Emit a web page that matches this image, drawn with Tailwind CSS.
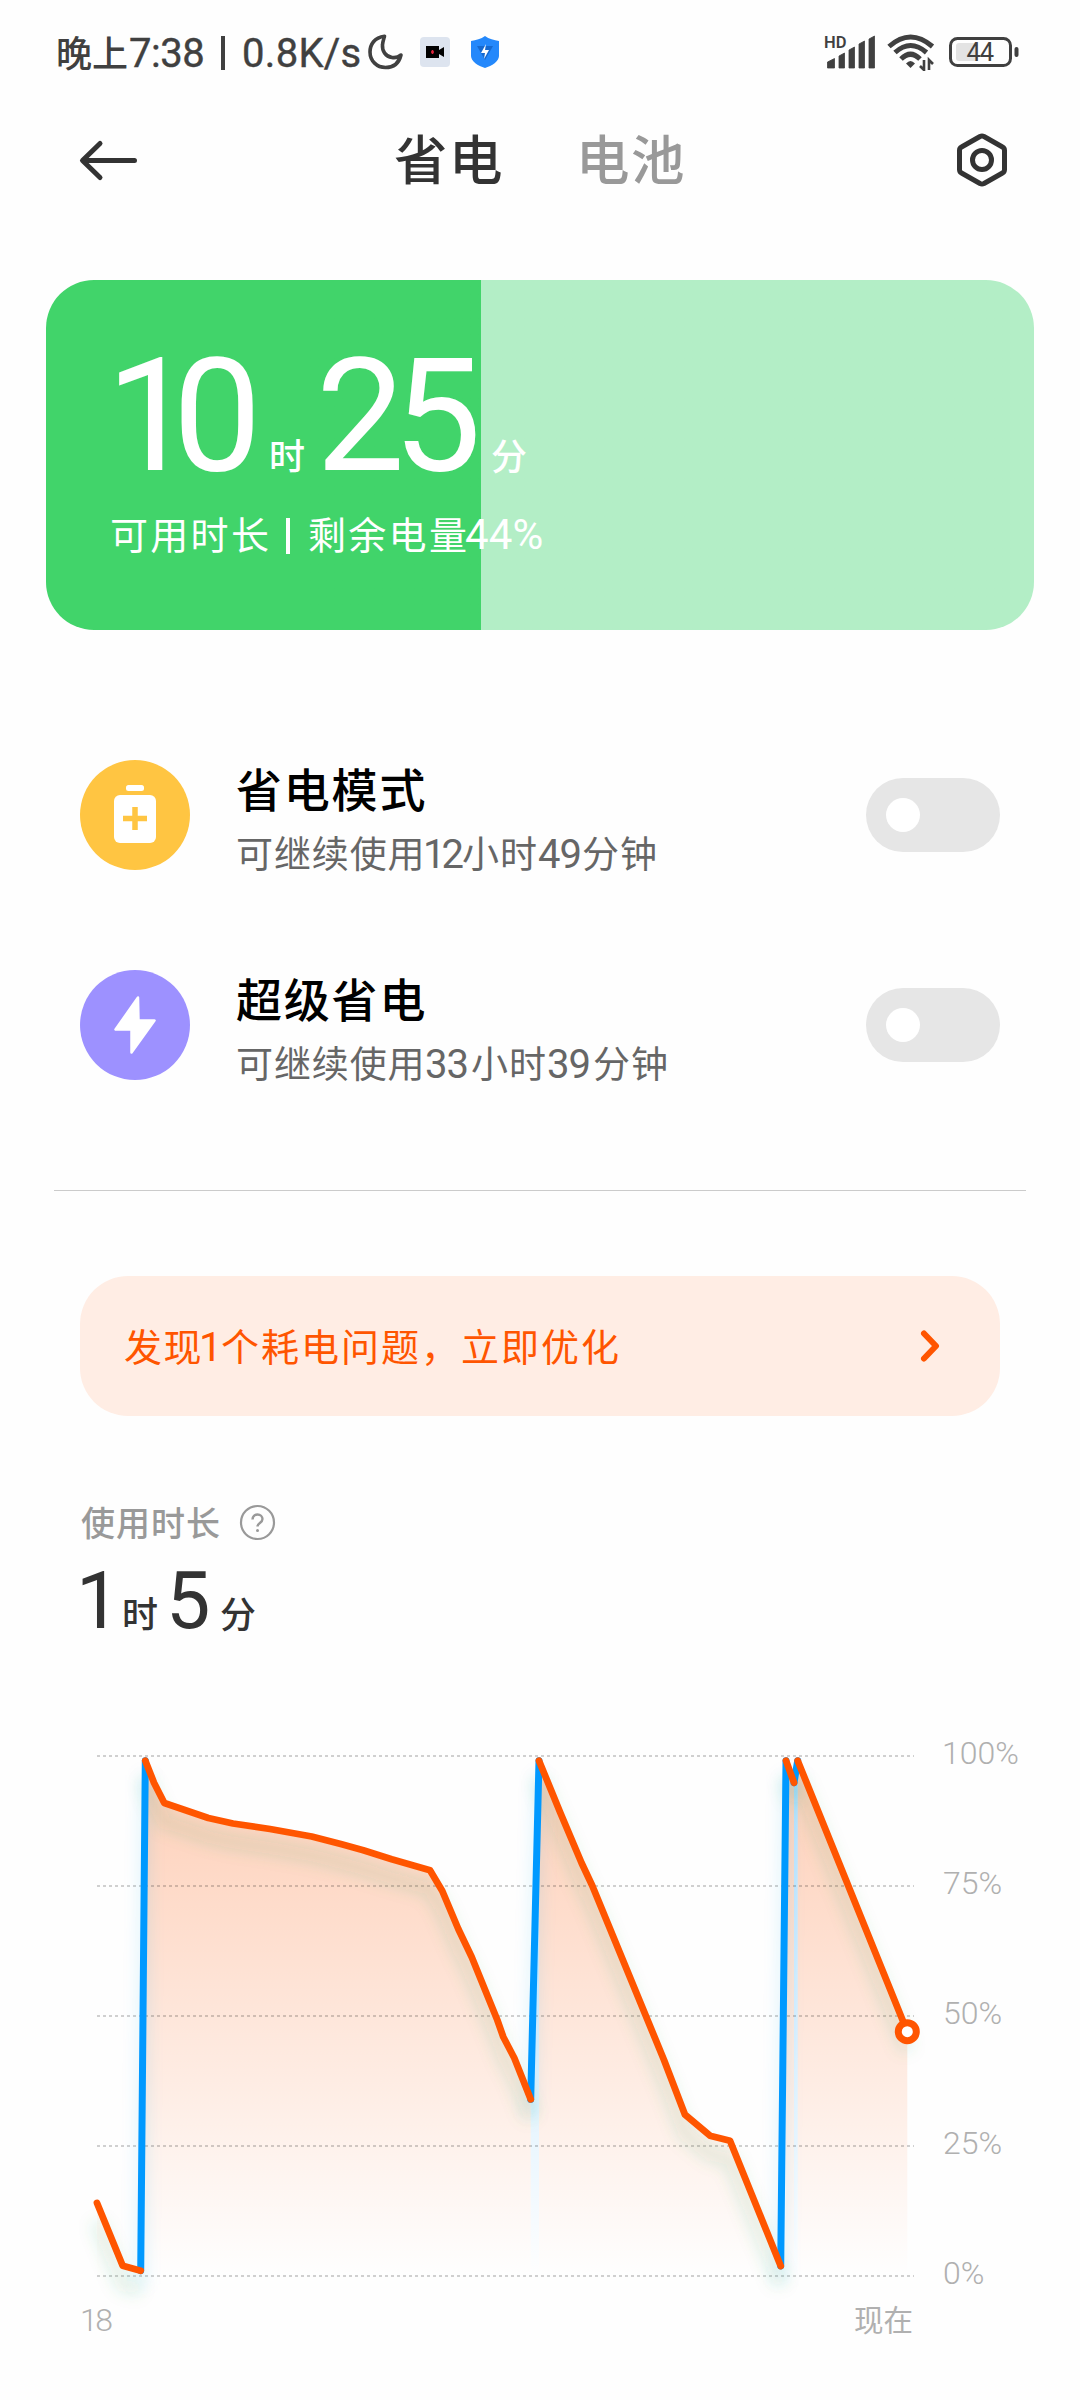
<!DOCTYPE html>
<html lang="zh-CN">
<head>
<meta charset="utf-8">
<title>省电与电池</title>
<script src="https://cdn.jsdelivr.net/npm/@tailwindcss/browser@4"></script>
</head>
<body class="bg-white">
<main class="flex h-[2400px] w-[1080px] flex-col overflow-hidden bg-[#fefefe] font-['Noto_Sans_CJK_SC',sans-serif] whitespace-nowrap text-[#333]">

  <!-- status bar -->
  <div class="flex h-[104px] items-center pl-[56px] text-[#404040]">
    <div class="flex w-[312px] items-baseline text-[36px] leading-[48px] font-medium">
      <span class="w-[73px]">晚上</span>
      <span class="w-[92px] font-['Roboto'] text-[40px] tracking-[-0.5px] font-normal [-webkit-text-stroke:0.4px]">7:38</span>
      <span class="mt-[2px] mr-[17px] h-[34px] w-[4px] self-center bg-[#404040]"></span>
      <span class="font-['Roboto'] text-[40px] tracking-[0.3px] font-normal [-webkit-text-stroke:0.4px]">0.8K/s</span>
    </div>
    <svg class="h-[36px] w-[36px]" viewBox="0 0 36 36" fill="none" stroke="#404040" stroke-width="3.6" stroke-linejoin="round"><path d="M16.500 2.200C6.500 3.500 2 10.500 2 18c0 9 7 15.500 15.500 15.500 8 0 13.500-4.500 15.500-12.500-3 2.500-6 3-9 2.500-6.500-1-10-6.500-9.500-12.500.2-3.500 1.200-6 2-8.800Z"/></svg>
    <svg class="ml-[16px] h-[30px] w-[30px]" viewBox="0 0 30 30"><rect width="30" height="30" rx="4" fill="#dde4ef"/><path d="M6 9h13v12H6zM19 13l5-3v10l-5-3z" fill="#000"/><path d="M12.500 13v4M11 15h3" stroke="#e0243c" stroke-width="1.600"/></svg>
    <svg class="ml-[21px] h-[32px] w-[28px]" viewBox="0 0 28 32"><path d="M14 0c4 3 9 4 14 5v15c0 5-7 10-14 12C7 30 0 25 0 20V5c5-1 10-2 14-5Z" fill="#2488fb"/><path d="M6 10h16l-8 14z" fill="#1669cf"/><path d="M15 8l-5 9h4l-1 6 5-9h-4z" fill="#fff"/></svg>
    <svg class="ml-[325px] h-[36px] w-[52px]" viewBox="0 0 52 36" fill="#404040"><text x="0" y="13.500" font-family="Roboto" font-weight="600" font-size="16.500">HD</text><path d="M3.500 28l7-3.500V34h-7zM15 22l5.500-3v15H15zM25 16l5.500-3v21H25zM35 10l5.500-3v27H35zM45 5l5.500-3v32H45z" stroke="#404040" stroke-width=".8" stroke-linejoin="round"/></svg>
    <svg class="ml-[11px] h-[38px] w-[48px]" viewBox="0 0 48 38" fill="none" stroke="#404040" stroke-width="5"><path d="M2 13.500Q23.500-5.500 45.500 13.500"/><path d="M8 19.500Q23.500 5.500 39.500 19.500"/><path d="M14 26Q23.500 16.500 33 26"/><path d="M19 30.500Q23.500 25.500 28 30.500L23.500 35Z" fill="#404040" stroke="none"/><path d="M37 27v10l-4-4M42 37V27l4 4" stroke-width="2.600"/></svg>
    <svg class="ml-[14px] h-[32px] w-[70px]" viewBox="0 0 70 32"><rect x="1.500" y="2.500" width="60" height="27" rx="7" fill="none" stroke="#404040" stroke-width="3"/><path d="M10 7h19v18H10a3 3 0 0 1-3-3V10a3 3 0 0 1 3-3Z" fill="#e3e3e3"/><rect x="65.500" y="11" width="4" height="10" rx="2" fill="#404040"/><text x="17.500" y="25" font-family="Roboto" font-size="25.500" textLength="27.500" font-weight="400" fill="#404040">44</text></svg>
  </div>

  <!-- header with tabs -->
  <header class="flex h-[112px] items-center pl-[78px]">
    <svg class="h-[44px] w-[62px]" viewBox="0 0 62 44" fill="none" stroke="#333" stroke-width="5" stroke-linecap="round" stroke-linejoin="round"><path d="M56.500 22.500H5M22 5.500L4.500 22.500 22 39.500"/></svg>
    <h1 class="mb-[6px] ml-[254px] w-[182px] text-[53.5px] leading-[56px] font-medium tracking-[1.5px]">省电</h1>
    <span class="mb-[6px] w-[379px] text-[53.5px] leading-[56px] font-medium tracking-[1.5px] text-[#999]">电池</span>
    <svg class="h-[58px] w-[54px]" viewBox="0 0 54 58" fill="none" stroke="#333" stroke-width="5" stroke-linejoin="round"><path d="M25 5.500q2-1 4 0l18.500 10.500q2 1 2 3.500v19q0 2.500-2 3.500L29 52.500q-2 1-4 0L6.500 42q-2-1-2-3.500v-19q0-2.500 2-3.500Z"/><circle cx="27" cy="29" r="9.500"/></svg>
  </header>

  <!-- remaining time card -->
  <section class="mx-[46px] mt-[64px] flex h-[350px] flex-col overflow-hidden rounded-[48px] bg-linear-to-r from-[#41d46a] from-44% to-[#b3eec6] to-44% pl-[64px] text-white">
    <div class="mt-[48px] flex h-[176px] items-baseline text-[36px] leading-[176px] font-medium">
      <span class="-ml-[4px] w-[163px] font-['Roboto'] text-[158px] font-normal tracking-[-22px]">10</span>
      <span class="w-[47px]">时</span>
      <span class="w-[175px] font-['Roboto'] text-[158px] font-normal tracking-[-12px]">25</span>
      <span>分</span>
    </div>
    <p class="mt-[1px] flex items-baseline text-[38px] leading-[56px] tracking-[2.3px]">
      <span class="w-[176px]">可用时长</span><span class="mt-[4px] mr-[18px] h-[36px] w-[4px] self-center bg-white"></span><span class="w-[157px]">剩余电量</span><span class="font-['Roboto'] text-[42px] tracking-[0.2px]">44%</span>
    </p>
  </section>

  <!-- saving modes -->
  <section class="mt-[130px] flex flex-col gap-[100px] px-[80px]">
    <div class="flex h-[110px] items-center">
      <svg class="h-[110px] w-[110px]" viewBox="0 0 110 110"><circle cx="55" cy="55" r="55" fill="#ffc542"/><rect x="46" y="25" width="18" height="6" rx="2.500" fill="#fff"/><rect x="34" y="35" width="42" height="48" rx="6" fill="#fff"/><path d="M55 47v23M43 58.500h24" stroke="#ffc542" stroke-width="5.500"/></svg>
      <div class="ml-[46px] w-[630px] pt-[13px]">
        <h2 class="text-[46px] leading-[58px] font-medium tracking-[1.8px] text-black">省电模式</h2>
        <p class="mt-[6px] flex items-baseline text-[37px] leading-[60px] tracking-[0.9px] text-[#666]"><span class="w-[187px]">可继续使用</span><span class="w-[39px] font-['Roboto'] text-[40px] tracking-[-4px]">12</span><span class="w-[76px]">小时</span><span class="w-[44px] font-['Roboto'] text-[40px] tracking-[-1px]">49</span><span>分钟</span></p>
      </div>
      <span class="flex h-[74px] w-[134px] items-center rounded-full bg-[#e6e6e6] pl-[20px]"><i class="h-[34px] w-[34px] rounded-full bg-white"></i></span>
    </div>
    <div class="flex h-[110px] items-center">
      <svg class="h-[110px] w-[110px]" viewBox="0 0 110 110"><circle cx="55" cy="55" r="55" fill="#9d91ff"/><path d="M58 27.500L35.500 59.500H51.500V82.500L74.500 50.500H58.500Z" fill="#fff" stroke="#fff" stroke-width="2.500" stroke-linejoin="round"/></svg>
      <div class="ml-[46px] w-[630px] pt-[13px]">
        <h2 class="text-[46px] leading-[58px] font-medium tracking-[1.8px] text-black">超级省电</h2>
        <p class="mt-[6px] flex items-baseline text-[37px] leading-[60px] tracking-[0.9px] text-[#666]"><span class="w-[189px]">可继续使用</span><span class="w-[46px] font-['Roboto'] text-[40px] tracking-[-1px]">33</span><span class="w-[76px]">小时</span><span class="w-[46px] font-['Roboto'] text-[40px] tracking-[-1px]">39</span><span>分钟</span></p>
      </div>
      <span class="flex h-[74px] w-[134px] items-center rounded-full bg-[#e6e6e6] pl-[20px]"><i class="h-[34px] w-[34px] rounded-full bg-white"></i></span>
    </div>
  </section>

  <div class="mx-[54px] mt-[110px] h-px bg-[#cbcbcb]"></div>

  <!-- issue banner -->
  <section class="mx-[80px] mt-[85px] flex h-[140px] items-center rounded-[48px] bg-[#ffede4] pl-[44px] text-[#ff5500]">
    <p class="flex w-[794px] items-baseline text-[38px] leading-[56px] tracking-[1.6px]"><span class="w-[75px]">发现</span><span class="w-[22px] font-['Roboto'] text-[41px] tracking-[-2px]">1</span><span class="tracking-[2px]">个耗电问题，立即优化</span></p>
    <svg class="h-[36px] w-[24px]" viewBox="0 0 24 36" fill="none" stroke="#ff5500" stroke-width="6" stroke-linecap="round" stroke-linejoin="round"><path d="M6 5.500L18 18 6 30.500"/></svg>
  </section>

  <!-- usage time -->
  <section class="mt-[78px] flex h-[56px] items-center pl-[81px] text-[#999]">
    <span class="w-[158px] text-[34px] leading-[48px] font-medium tracking-[1px]">使用时长</span>
    <svg class="h-[37px] w-[37px]" viewBox="0 0 37 37" fill="none" stroke="#999"><circle cx="18.500" cy="18.500" r="16.500" stroke-width="2.200"/><path d="M13.500 15.500c0-3 2.200-5 5-5s5 1.900 5 4.600c0 3.900-5 4-5 7.400" stroke-width="2.400"/><circle cx="18.500" cy="26.500" r="1.500" fill="#999" stroke="none"/></svg>
  </section>
  <div class="flex h-[90px] items-baseline pl-[76px] text-[36px] leading-[102px] font-medium">
    <span class="w-[46px] font-['Roboto'] text-[79px] font-normal">1</span>
    <span class="w-[44px]">时</span>
    <span class="w-[54px] font-['Roboto'] text-[79px] font-normal">5</span>
    <span>分</span>
  </div>

  <!-- battery level chart: x 0..1080, y 1640..2400 -->
  <svg class="h-[760px] w-[1080px]" viewBox="0 1640 1080 760" fill="none">
    <defs>
      <linearGradient id="drain" gradientUnits="userSpaceOnUse" x1="0" y1="1760" x2="0" y2="2276"><stop stop-color="#ff5500" stop-opacity=".28"/><stop offset="1" stop-color="#ff5500" stop-opacity="0"/></linearGradient>
      <linearGradient id="charge" gradientUnits="userSpaceOnUse" x1="0" y1="1760" x2="0" y2="2276"><stop stop-color="#0099ff" stop-opacity=".3"/><stop offset="1" stop-color="#0099ff" stop-opacity="0"/></linearGradient>
      <filter id="soft" filterUnits="userSpaceOnUse" x="0" y="1640" width="1080" height="760"><feGaussianBlur stdDeviation="7.500"/></filter>
      <g id="drain-lines">
        <path d="M97 2203L122.700 2265.700 140.700 2270.700"/>
        <path d="M145.300 1760.700L154 1782.700 164.300 1803 208.300 1818 233 1823.500 270 1829 311.700 1836.500 341.700 1844.300 363.300 1850.300 391.700 1859.300 430 1870.300 442.300 1891 458.300 1929 471.700 1957 497.300 2020 503.300 2037 514.300 2058 530.700 2099.300"/>
        <path d="M539 1760.700L560 1812 581.700 1863.300 592.300 1885.700 664 2060 685 2114.700 710 2135.700 730 2140.700 780.700 2266"/>
        <path d="M786 1760.700L794 1782.700M797.700 1760.700L907.300 2031.700"/>
      </g>
      <g id="charge-lines">
        <path d="M140.700 2270.700L145.300 1760.700M530.700 2099.300L539 1760.700M780.700 2266L786 1760.700M794 1782.700L797.700 1760.700"/>
      </g>
    </defs>
    <g fill="url(#drain)">
      <path d="M97 2203L122.700 2265.700 140.700 2270.700V2276H97Z"/>
      <path d="M145.300 1760.700L154 1782.700 164.300 1803 208.300 1818 233 1823.500 270 1829 311.700 1836.500 341.700 1844.300 363.300 1850.300 391.700 1859.300 430 1870.300 442.300 1891 458.300 1929 471.700 1957 497.300 2020 503.300 2037 514.300 2058 530.700 2099.300V2276H145.300Z"/>
      <path d="M539 1760.700L560 1812 581.700 1863.300 592.300 1885.700 664 2060 685 2114.700 710 2135.700 730 2140.700 780.700 2266V2276H539Z"/>
      <path d="M786 1760.700L794 1782.700V2276H786ZM797.700 1760.700L907.300 2031.700V2276H797.700Z"/>
    </g>
    <path fill="url(#charge)" d="M530.700 2099.300L539 1760.700V2276H530.700ZM794 1782.700L797.700 1760.700V2276H794Z"/>
    <g stroke="#000" stroke-opacity=".18" stroke-width="2" stroke-dasharray="3 3"><path d="M97 1756H914M97 1886H914M97 2016H914M97 2146H914M97 2276H914"/></g>
    <g filter="url(#soft)" transform="translate(0 19)">
      <use href="#drain-lines" stroke="#2a9a55" stroke-opacity=".13" stroke-width="14"/>
    </g>
    <g filter="url(#soft)" transform="translate(0 14)">
      <use href="#charge-lines" stroke="#00a8e8" stroke-opacity=".14" stroke-width="10"/>
    </g>
    <use href="#charge-lines" stroke="#0099ff" stroke-width="7" stroke-linecap="round"/>
    <use href="#drain-lines" stroke="#ff5500" stroke-width="6.800" stroke-linecap="round" stroke-linejoin="round"/>
    <circle cx="907.300" cy="2031.700" r="9" fill="#fff" stroke="#ff5500" stroke-width="7"/>
    <g fill="#b0b0b0" font-family="Roboto" font-size="32" font-weight="300">
      <text x="942" y="1763.500">100%</text>
      <text x="943" y="1893.500">75%</text>
      <text x="943" y="2023.500">50%</text>
      <text x="943" y="2153.500">25%</text>
      <text x="943" y="2283.500">0%</text>
      <text x="80" y="2331" textLength="33">18</text>
      <text x="854" y="2330.500" font-family="Noto Sans CJK SC" font-size="29.500" font-weight="400" textLength="59">现在</text>
    </g>
  </svg>
</main>
</body>
</html>
